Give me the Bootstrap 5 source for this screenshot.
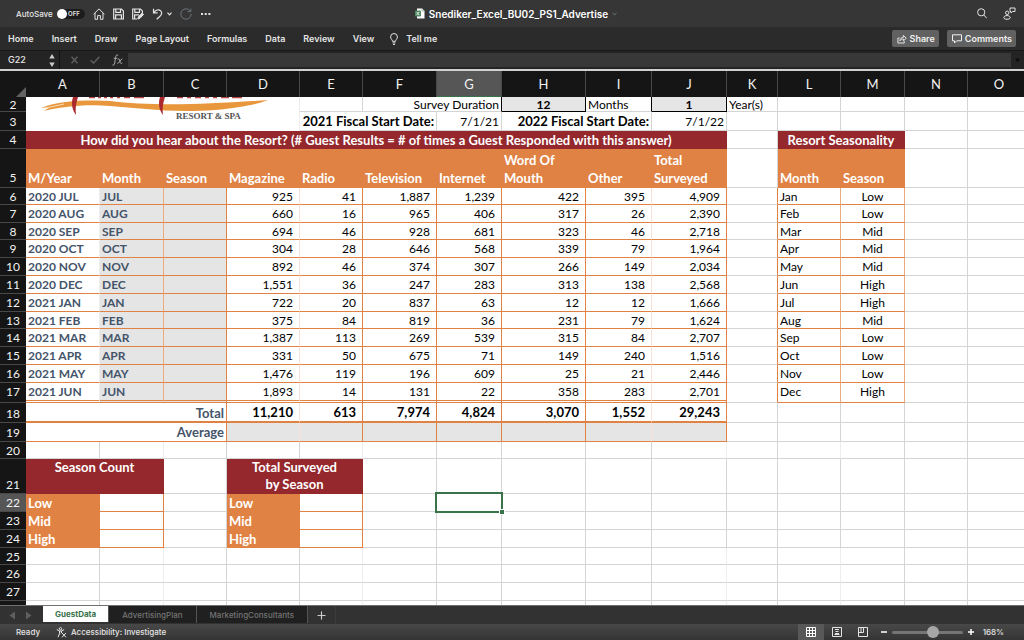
<!DOCTYPE html>
<html lang="en">
<head>
<meta charset="utf-8">
<meta name="viewport" content="width=device-width, initial-scale=1">
<title>Snediker_Excel_BU02_PS1_Advertise</title>
<link rel="stylesheet" href="https://cdn.jsdelivr.net/npm/bootstrap@5.3.0/dist/css/bootstrap.min.css">
<style>
:root{--orange:#e08244;--maroon:#94282d;--slate:#44546a;--line:#d4d4d4;--faint:#ededed;--shade:#e5e5e5;--green:#38734a}
body{font:500 9px/12px Inter,"Liberation Sans",sans-serif;color:#e4e4e4;background:#2b2b2b;fill:none;stroke:currentColor}
button,input{font:inherit;color:inherit}
svg{flex:none}
.plain{background:none;border:0;padding:0;line-height:0}
.titlebar{height:27px;background:#363636}
.doc-title{font-size:10px;font-weight:600;color:#fff}
.side{flex:1 1 0}
.small-ui{font-size:8px}
.ribbon{height:24px;background:#2b2b2b;border-bottom:1px solid #181818}
.ribbon a{color:#e4e4e4;text-decoration:none}
.ribbon-tabs{gap:18px;font-weight:600}
.ribbon .tool{height:17px;background:#616161;border:0;border-radius:2px;padding:0 4px 0 5px;gap:3px;font-weight:600;color:#f0f0f0}
.switch-box{appearance:none;width:28px;height:10px;border-radius:5px;background:#1c1c1c;margin:0;position:relative}
.switch-box::before{content:"";display:block;width:10px;height:10px;border-radius:50%;background:#fff}
.switch-word{position:absolute;right:5px;top:0;font-size:6px;line-height:10px;font-weight:600}
.formula-bar{height:18px;background:#242424}
.name-box{width:60px;border-right:1px solid #111}
.name-box input{width:40px;background:none;border:0;padding:0;outline:0}
.formula-tools{gap:12px;padding:0 5px 0 11px}
.formula-input{background:#383838;border:0;height:14px;outline:0;min-width:0;padding:0 4px}
.grid-area{background:#fff;border-top:2px solid #d0d0d0;min-height:0;overflow:hidden}

.sheet{table-layout:fixed;border-collapse:separate;border-spacing:0;width:1031px;min-width:100%;font:400 12px/15px Lato,"Noto Sans",sans-serif;color:#000}
.sheet th,.sheet td{box-sizing:border-box;padding:0 2px;border:0 solid var(--line);border-width:0 1px 1px 0;white-space:nowrap;height:18px;vertical-align:bottom;line-height:16px;overflow:hidden}
.sheet thead th{height:26px;background:#151515;color:#f2f2f2;font-size:13px;font-weight:400;text-align:center;vertical-align:middle;border-color:#484848;border-bottom:0}
.sheet thead th.on{background:#565656;border-bottom:1px solid var(--green)}
.sheet tbody th[scope=row]{background:#151515;color:#f2f2f2;font-weight:400;text-align:center;border-color:#484848;border-right:0}
.sheet tbody th.on[scope=row]{background:#565656}
.sheet thead .corner{border-right:0;vertical-align:bottom;line-height:0;padding:0;text-align:right}
.sheet b,.sheet .maroon,.sheet .fill,.sheet .end.label{font-size:13px}
.sheet .h15>*{height:15px;line-height:13px}
.sheet .h17>*{height:17px;line-height:15px}
.sheet .h19>*{height:19px;line-height:17px}
.sheet .h20>*{height:20px}
.sheet .head>*{height:39px;line-height:18px}
.sheet .tall>*{height:35px;line-height:17px}
.sheet .end,.sheet .data td:nth-child(n+5):nth-child(-n+11){text-align:right}
.sheet .data td:nth-child(n+5):nth-child(-n+11),.sheet .total td.sum{padding-right:6px}
.sheet .mid,.sheet .data td:nth-child(14){text-align:center}
.sheet .data td:nth-child(2),.sheet .data td:nth-child(3),.sheet .label{font-weight:700;color:var(--slate)}
.sheet .data td:nth-child(3),.sheet .data td:nth-child(4),.sheet .shade{background:var(--shade)}
.sheet .data td:nth-child(-n+14),.sheet .o{border-color:var(--orange)}
.sheet .data td:nth-child(12){border-bottom-color:var(--line)}
.sheet .data td:nth-child(2){border-right-color:#eee}
.sheet .data td:nth-child(5),.sheet .data td:nth-child(10),.sheet .o.soft{border-right-color:#f9e3d6}
.sheet .data td:nth-child(3),.sheet .data td:nth-child(13),.sheet .data td:nth-child(14){border-right-color:#ecaa80}
.sheet .last>*{padding-bottom:2px}
.sheet .last td:nth-child(-n+11){border-bottom:3px double var(--orange);padding-bottom:0}
.sheet .total .o{border-bottom:2px solid var(--orange)}
.sheet .maroon{background:var(--maroon);border-color:var(--maroon);color:#fff;font-weight:700;text-align:center}
.sheet .fill{background:var(--orange);border-color:var(--orange);color:#fff;font-weight:700;text-align:left}
.sheet .box{background:var(--shade);border-color:#000;font-weight:700;text-align:center}
.sheet .rb{border-right-color:#000}
.sheet .free td:nth-child(3),.sheet .free td:nth-child(6),.sheet .free td:nth-child(11),.sheet .free td:nth-child(13){border-right-color:var(--faint)}
.sheet .logo{padding:0;line-height:0;vertical-align:top;border-color:var(--faint);border-bottom:0}
.sheet .pick{position:relative;overflow:visible}
.cursor{position:absolute;inset:-2px;border:2px solid var(--green)}
.cursor::after{content:"";position:absolute;right:-3px;bottom:-3px;width:4px;height:4px;background:var(--green);outline:1px solid #fff}

.tabs-bar{height:19px;background:#323232;border-top:1px solid #707070}
.tabs-bar button{border:0;height:17px;padding:0 13px;background:#202020;color:#747474;border-right:1px solid #555}
.tabs-bar .current{background:#fff;color:var(--green);font-weight:700;height:16px;padding:0 12px}
.tabs-bar .add{background:none;padding:0 9px;border-color:#3c3c3c;line-height:0}
.status{height:16px;background:linear-gradient(#484848,#343434)}
.view{width:26px;height:16px}
.view.on{background:#585858}
.zoomer{appearance:none;width:71px;height:12px;background:none;margin:0}
.zoomer::-webkit-slider-runnable-track{height:3px;background:#757575;border-radius:2px}
.zoomer::-webkit-slider-thumb{appearance:none;width:12px;height:12px;border-radius:50%;background:#a6a6a6;margin-top:-5px}
</style>
</head>
<body class="vh-100 d-flex flex-column overflow-hidden">

<header class="titlebar d-flex align-items-center flex-shrink-0">
  <div class="side d-flex align-items-center ps-3">
    <label for="autosave" class="small-ui me-1">AutoSave</label>
    <span class="position-relative d-flex me-2"><input type="checkbox" id="autosave" class="switch-box"><span class="switch-word">OFF</span></span>
    <button class="plain me-2" aria-label="Home"><svg width="12" height="12" viewBox="0 0 12 12"><path d="M.6 6.200 6 .9l5.400 5.300M2 5v6.300h2.600V7.600h2.800v3.700H10V5"/></svg></button>
    <button class="plain me-2" aria-label="Save"><svg width="11" height="12" viewBox="0 0 11 12"><path d="M.7 1h7.800l1.900 1.900V11H.7zM2.800 1v3.300h4.700V1M2.600 11V6.800h5.800V11" stroke-width="1.200"/></svg></button>
    <button class="plain me-2" aria-label="Save as"><svg width="12" height="12" viewBox="0 0 12 12"><path d="M5 11H.7V1h7.800l1.900 1.900V5M2.800 1v3.300h4.700V1M2.600 11V6.800H7" stroke-width="1.200"/><path d="m5.800 11 .6-2.200L10.200 5l1.400 1.400-3.700 3.900z" fill="currentColor"/></svg></button>
    <button class="plain me-1" aria-label="Undo"><svg width="11" height="12" viewBox="0 0 11 12"><path d="M1.500.8v4.100h4.100M1.700 4.700C3.300 2 6.800.8 8.700 2.800c2 2.200.7 4.200-1.200 5.900L4.700 11.300" stroke-width="1.200"/></svg></button>
    <button class="plain me-2" aria-label="Undo history"><svg width="5" height="4" viewBox="0 0 5 4"><path d="m.5.700 2 2.200 2-2.200" stroke-width="1.200"/></svg></button>
    <button class="plain me-2 text-secondary" aria-label="Repeat"><svg width="12" height="12" viewBox="0 0 12 12"><path d="M10.500 3.400A5.200 5.200 0 1 0 11.200 6M10.800.6v3H7.700"/></svg></button>
    <button class="plain" aria-label="More"><svg width="11" height="4" viewBox="0 0 11 4"><path d="M1 2h2M4.700 2h2M8.400 2h2" stroke-width="1.800"/></svg></button>
  </div>
  <div class="doc-title d-flex align-items-center">
    <svg class="me-1" width="10" height="11" viewBox="0 0 10 11"><path d="M2 .5h5L9.500 3v7.500H2z" fill="#fff" stroke="none"/><path d="M7 .5V3h2.500" stroke="#a9bdb0"/><rect y="2.500" width="6" height="6" rx="1" fill="#4f8a65" stroke="none"/><path d="m1.700 4 2.500 3M4.200 4 1.700 7" stroke="#dce9e0"/></svg>
    Snediker_Excel_BU02_PS1_Advertise
    <svg class="ms-1" width="5" height="4" viewBox="0 0 5 4" stroke="#777"><path d="m.5 1 2 1.800L4.500 1"/></svg>
  </div>
  <div class="side d-flex align-items-center justify-content-end gap-3 pe-2">
    <button class="plain" aria-label="Search"><svg width="10" height="11" viewBox="0 0 10 11"><circle cx="4.200" cy="4.300" r="3.600"/><path d="m6.800 7 3 3.300"/></svg></button>
    <button class="plain" aria-label="Collaborators"><svg width="13" height="13" viewBox="0 0 13 13"><circle cx="4.200" cy="5.800" r="1.700"/><path d="M.8 10.800c0-3 6.400-3 6.400 0 0 1.900-6.400 1.900-6.400 0zM7 1h5v3.500H9.600L8 6V4.500H7z"/></svg></button>
  </div>
</header>

<nav class="ribbon d-flex align-items-center justify-content-between flex-shrink-0 px-2" aria-label="Ribbon">
  <div class="ribbon-tabs d-flex align-items-center">
    <a href="#">Home</a><a href="#">Insert</a><a href="#">Draw</a><a href="#">Page Layout</a><a href="#">Formulas</a><a href="#">Data</a><a href="#">Review</a><span class="d-flex gap-3"><a href="#">View</a>
    <a href="#" class="d-flex align-items-center"><svg class="me-2" width="8" height="12" viewBox="0 0 8 12"><path d="M2.500 8.300C2.500 6.800.6 6 .6 3.900a3.400 3.400 0 0 1 6.800 0c0 2.100-1.900 2.900-1.900 4.400zM2.600 9.900h2.800M3 11.400h2"/></svg>Tell me</a></span>
  </div>
  <div class="d-flex gap-2">
    <button class="tool d-flex align-items-center"><svg width="10" height="10" viewBox="0 0 11 10"><path d="M3 4H1v5.400h7V7.500M3.200 7C3.500 4.500 5 3.200 7 3.200V1l3.200 3.200L7 7V5C5.500 5 4.200 5.500 3.200 7z"/></svg>Share</button>
    <button class="tool d-flex align-items-center"><svg width="10" height="10" viewBox="0 0 10 10"><path d="M.5.800h9v6H4.700L2.500 9V6.800h-2z"/></svg>Comments</button>
  </div>
</nav>

<div class="formula-bar d-flex align-items-center flex-shrink-0">
  <div class="name-box d-flex align-items-center justify-content-between ps-2 pe-1 h-100">
    <input type="text" value="G22" aria-label="Name box">
    <svg width="6" height="13" viewBox="0 0 6 13" stroke="none"><path d="M3 0l2.700 4.500H.3zM3 13 .3 8.500h5.400z" fill="#ccc"/></svg>
  </div>
  <div class="formula-tools d-flex align-items-center">
    <button class="plain" aria-label="Cancel"><svg width="7" height="8" viewBox="0 0 7 8" stroke="#5e5e5e" stroke-width="1.500"><path d="m.5.800 6 6.400M6.500.800l-6 6.400"/></svg></button>
    <button class="plain" aria-label="Enter"><svg width="10" height="8" viewBox="0 0 10 8" stroke="#5e5e5e" stroke-width="1.500"><path d="m.6 4.200 3 2.800L9.400.800"/></svg></button>
    <button class="plain" aria-label="Insert function"><svg width="11" height="12" viewBox="0 0 11 12" stroke="#aaa"><path d="M6.200 1.200C4.500.4 3.900 1.500 3.600 3.500L2.700 9c-.3 1.800-1 2.500-2.200 2M1.700 4.300h3.500M5.600 5.200c1.500-.9 1.800 0 2.300 2.200s.9 2.400 2.400 1.500M10.400 4.800C8.500 5 7.500 9.600 5.300 9.300"/></svg></button>
  </div>
  <input type="text" class="formula-input flex-grow-1" aria-label="Formula">
  <svg class="mx-1" width="5" height="5" viewBox="0 0 5 5" stroke="none"><path d="M0 .5h5l-2.500 4z" fill="#0c0c0c"/></svg>
</div>

<main class="grid-area flex-grow-1">
<table class="sheet">
<colgroup><col style="width:26px"><col style="width:74px"><col style="width:64px"><col style="width:63px"><col style="width:73px"><col style="width:63px"><col style="width:74px"><col style="width:65px"><col style="width:84px"><col style="width:66px"><col style="width:75px"><col style="width:51px"><col style="width:63px"><col style="width:64px"><col style="width:63px"><col style="width:63px"></colgroup>
<thead><tr><th class="corner" aria-label="Select all"><svg width="10" height="10" viewBox="0 0 10 10" stroke="none"><path d="M10 0v10H0z" fill="#626262"/></svg></th><th scope="col">A</th><th scope="col">B</th><th scope="col">C</th><th scope="col">D</th><th scope="col">E</th><th scope="col">F</th><th scope="col" class="on">G</th><th scope="col">H</th><th scope="col">I</th><th scope="col">J</th><th scope="col">K</th><th scope="col">L</th><th scope="col">M</th><th scope="col">N</th><th scope="col">O</th></tr></thead>
<tbody>
<tr class="h15"><th scope="row">2</th>
  <td class="logo" colspan="4" rowspan="2"><svg width="259" height="33" viewBox="26 97 259 33" role="img" aria-label="Resort &amp; Spa logo">
    <path d="M41 108C60 100 90 100 110 101 150 106 200 105 268 100 258 104 240 108 215 110 170 113 140 108 110 106 85 104 60 107 44 111l6-4z" fill="#e8973c" stroke="none"/>
    <path d="m46 108 18-4" stroke="#f8dcb8"/>
    <path d="M89 97.500h6M98 97.500h3M104 97.500h3M110 97.500h3M117 97.500h3M124 97.500h6M134 97.500h10M177 97.500h6M187 97.500h4M195 97.500h6M205 97.500h4M213 97.500h4M221 97.500h8M232 97.500h10" stroke="#b8474a" stroke-width="1.500"/>
    <path d="M73 97c-2 6-1 13 3 18-1-6 0-12 2-18zM160 97c-2 6-1 13 3 18-1-6 0-12 2-18z" fill="#a9292f" stroke="none"/>
    <text x="176" y="119" font-family="Liberation Serif, serif" font-size="9" font-weight="700" fill="#555" stroke="none">RESORT &amp; SPA</text></svg></td>
  <td></td><td colspan="2" class="end rb">Survey Duration</td><td class="box">12</td><td class="rb">Months</td><td class="box">1</td><td>Year(s)</td><td></td><td></td><td></td><td></td></tr>
<tr class="h19"><th scope="row">3</th><td colspan="2" class="end"><b>2021 Fiscal Start Date:</b></td><td class="end">7/1/21</td><td colspan="2" class="end"><b>2022 Fiscal Start Date:</b></td><td class="end">7/1/22</td><td></td><td></td><td></td><td></td><td></td></tr>
<tr><th scope="row">4</th><td colspan="10" class="maroon">How did you hear about the Resort? (# Guest Results = # of times a Guest Responded with this answer)</td><td></td><td colspan="2" class="maroon">Resort Seasonality</td><td></td><td></td></tr>
<tr class="head"><th scope="row">5</th><th class="fill">M/Year</th><th class="fill">Month</th><th class="fill">Season</th><th class="fill">Magazine</th><th class="fill">Radio</th><th class="fill">Television</th><th class="fill">Internet</th><th class="fill">Word Of<br>Mouth</th><th class="fill">Other</th><th class="fill">Total<br>Surveyed</th><td></td><th class="fill">Month</th><th class="fill">Season</th><td></td><td></td></tr>
<tr class="data h17"><th scope="row">6</th><td>2020 JUL</td><td>JUL</td><td></td><td>925</td><td>41</td><td>1,887</td><td>1,239</td><td>422</td><td>395</td><td>4,909</td><td></td><td>Jan</td><td>Low</td><td></td><td></td></tr>
<tr class="data"><th scope="row">7</th><td>2020 AUG</td><td>AUG</td><td></td><td>660</td><td>16</td><td>965</td><td>406</td><td>317</td><td>26</td><td>2,390</td><td></td><td>Feb</td><td>Low</td><td></td><td></td></tr>
<tr class="data h17"><th scope="row">8</th><td>2020 SEP</td><td>SEP</td><td></td><td>694</td><td>46</td><td>928</td><td>681</td><td>323</td><td>46</td><td>2,718</td><td></td><td>Mar</td><td>Mid</td><td></td><td></td></tr>
<tr class="data"><th scope="row">9</th><td>2020 OCT</td><td>OCT</td><td></td><td>304</td><td>28</td><td>646</td><td>568</td><td>339</td><td>79</td><td>1,964</td><td></td><td>Apr</td><td>Mid</td><td></td><td></td></tr>
<tr class="data"><th scope="row">10</th><td>2020 NOV</td><td>NOV</td><td></td><td>892</td><td>46</td><td>374</td><td>307</td><td>266</td><td>149</td><td>2,034</td><td></td><td>May</td><td>Mid</td><td></td><td></td></tr>
<tr class="data"><th scope="row">11</th><td>2020 DEC</td><td>DEC</td><td></td><td>1,551</td><td>36</td><td>247</td><td>283</td><td>313</td><td>138</td><td>2,568</td><td></td><td>Jun</td><td>High</td><td></td><td></td></tr>
<tr class="data"><th scope="row">12</th><td>2021 JAN</td><td>JAN</td><td></td><td>722</td><td>20</td><td>837</td><td>63</td><td>12</td><td>12</td><td>1,666</td><td></td><td>Jul</td><td>High</td><td></td><td></td></tr>
<tr class="data h17"><th scope="row">13</th><td>2021 FEB</td><td>FEB</td><td></td><td>375</td><td>84</td><td>819</td><td>36</td><td>231</td><td>79</td><td>1,624</td><td></td><td>Aug</td><td>Mid</td><td></td><td></td></tr>
<tr class="data"><th scope="row">14</th><td>2021 MAR</td><td>MAR</td><td></td><td>1,387</td><td>113</td><td>269</td><td>539</td><td>315</td><td>84</td><td>2,707</td><td></td><td>Sep</td><td>Low</td><td></td><td></td></tr>
<tr class="data"><th scope="row">15</th><td>2021 APR</td><td>APR</td><td></td><td>331</td><td>50</td><td>675</td><td>71</td><td>149</td><td>240</td><td>1,516</td><td></td><td>Oct</td><td>Low</td><td></td><td></td></tr>
<tr class="data"><th scope="row">16</th><td>2021 MAY</td><td>MAY</td><td></td><td>1,476</td><td>119</td><td>196</td><td>609</td><td>25</td><td>21</td><td>2,446</td><td></td><td>Nov</td><td>Low</td><td></td><td></td></tr>
<tr class="data last h20"><th scope="row">17</th><td>2021 JUN</td><td>JUN</td><td></td><td>1,893</td><td>14</td><td>131</td><td>22</td><td>358</td><td>283</td><td>2,701</td><td></td><td>Dec</td><td>High</td><td></td><td></td></tr>
<tr class="total h20"><th scope="row">18</th><td colspan="3" class="o label end">Total</td><td class="o soft sum end"><b>11,210</b></td><td class="o sum end"><b>613</b></td><td class="o sum end"><b>7,974</b></td><td class="o sum end"><b>4,824</b></td><td class="o sum end"><b>3,070</b></td><td class="o soft sum end"><b>1,552</b></td><td class="o sum end"><b>29,243</b></td><td></td><td></td><td></td><td></td><td></td></tr>
<tr class="h19"><th scope="row">19</th><td colspan="3" class="o label end">Average</td><td class="o soft shade"></td><td class="o shade"></td><td class="o shade"></td><td class="o shade"></td><td class="o shade"></td><td class="o soft shade"></td><td class="o shade"></td><td></td><td></td><td></td><td></td><td></td></tr>
<tr class="free h17"><th scope="row">20</th><td></td><td></td><td></td><td></td><td></td><td></td><td></td><td></td><td></td><td></td><td></td><td></td><td></td><td></td><td></td></tr>
<tr class="tall"><th scope="row">21</th><td colspan="2" class="maroon align-top">Season Count</td><td></td><td colspan="2" class="maroon">Total Surveyed<br>by Season</td><td></td><td></td><td></td><td></td><td></td><td></td><td></td><td></td><td></td><td></td></tr>
<tr><th scope="row" class="on">22</th><th class="fill">Low</th><td class="o"></td><td></td><th class="fill">Low</th><td class="o"></td><td></td><td class="pick"><div class="cursor"></div></td><td></td><td></td><td></td><td></td><td></td><td></td><td></td><td></td></tr>
<tr><th scope="row">23</th><th class="fill">Mid</th><td class="o"></td><td></td><th class="fill">Mid</th><td class="o"></td><td></td><td></td><td></td><td></td><td></td><td></td><td></td><td></td><td></td><td></td></tr>
<tr><th scope="row">24</th><th class="fill">High</th><td class="o"></td><td></td><th class="fill">High</th><td class="o"></td><td></td><td></td><td></td><td></td><td></td><td></td><td></td><td></td><td></td><td></td></tr>
<tr class="free h17"><th scope="row">25</th><td></td><td></td><td></td><td></td><td></td><td></td><td></td><td></td><td></td><td></td><td></td><td></td><td></td><td></td><td></td></tr>
<tr class="free"><th scope="row">26</th><td></td><td></td><td></td><td></td><td></td><td></td><td></td><td></td><td></td><td></td><td></td><td></td><td></td><td></td><td></td></tr>
<tr class="free"><th scope="row">27</th><td></td><td></td><td></td><td></td><td></td><td></td><td></td><td></td><td></td><td></td><td></td><td></td><td></td><td></td><td></td></tr>
<tr class="free"><th scope="row"></th><td></td><td></td><td></td><td></td><td></td><td></td><td></td><td></td><td></td><td></td><td></td><td></td><td></td><td></td><td></td></tr>
</tbody>
</table>
</main>

<nav class="tabs-bar small-ui d-flex align-items-start flex-shrink-0" aria-label="Sheets">
  <div class="d-flex align-items-center h-100 px-2">
    <svg width="27" height="9" viewBox="0 0 27 9" stroke="none"><path d="M7 .5v8L1.500 4.500zM18 .5v8l5.500-4z" fill="#5f5f5f"/></svg>
  </div>
  <button class="current">GuestData</button><button>AdvertisingPlan</button><button>MarketingConsultants</button>
  <button class="add h-100" aria-label="New sheet"><svg width="9" height="9" viewBox="0 0 9 9" stroke="#ccc" stroke-width="1.200"><path d="M4.500.5v8M.5 4.500h8"/></svg></button>
</nav>

<footer class="status small-ui d-flex align-items-center justify-content-between flex-shrink-0 ps-3">
  <div class="d-flex align-items-center">
    <span class="me-3">Ready</span>
    <svg width="11" height="11" viewBox="0 0 11 11"><circle cx="4.500" cy="1.800" r="1.200"/><path d="M.8 2.500 3.500 4v2.500L2 10.200M8.200 2.500 5.500 4v2M3.500 4h2M3.300 7l1-.6M6 6l4 4.300M10 6l-4 4.300"/></svg>
    <span class="ms-1">Accessibility: Investigate</span>
  </div>
  <div class="d-flex align-items-center">
    <button class="plain view on" aria-label="Normal view"><svg width="10" height="10" viewBox="0 0 10 10" stroke="#fff"><path d="M.5.500h9v9h-9zM3.500.500v9M6.500.500v9M.5 3.500h9M.5 6.500h9"/></svg></button>
    <button class="plain view" aria-label="Page layout view"><svg width="10" height="10" viewBox="0 0 10 10"><path d="M.5.500h9v9h-9z"/><path d="M3 2.500h4M3.500 4.500h3M3 6.500h4M2.500 7.500h5"/></svg></button>
    <button class="plain view" aria-label="Page break view"><svg width="10" height="10" viewBox="0 0 10 10"><path d="M.5 9.500v-9h9v9h-9M.5 5.500h5v-5M3 .5v5"/></svg></button>
    <button class="plain ms-1" aria-label="Zoom out"><svg width="8" height="8" viewBox="0 0 8 8" stroke="#fff" stroke-width="1.500"><path d="M1 4h6"/></svg></button>
    <input type="range" class="zoomer mx-1" min="0" max="100" value="60" aria-label="Zoom">
    <button class="plain" aria-label="Zoom in"><svg width="8" height="8" viewBox="0 0 8 8" stroke="#fff" stroke-width="1.500"><path d="M1 4h6M4 1v6"/></svg></button>
    <span class="ms-2 me-3 pe-1">168%</span>
  </div>
</footer>
<script src="https://cdn.jsdelivr.net/npm/bootstrap@5.3.0/dist/js/bootstrap.bundle.min.js"></script>
</body>
</html>
